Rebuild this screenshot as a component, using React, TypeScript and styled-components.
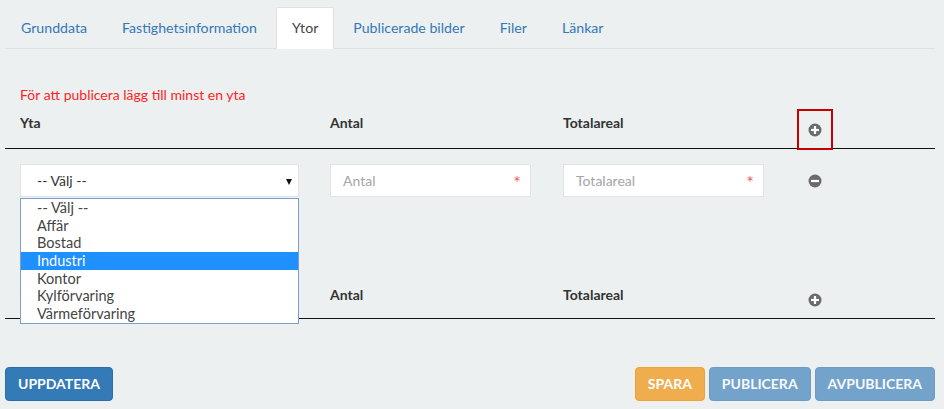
import React from "react";
import styled, { createGlobalStyle, css } from "styled-components";

const GlobalStyle = createGlobalStyle`
  html, body { margin: 0; padding: 0; background: #ecf0f1; }
  body { font-family: Lato, "Open Sans", sans-serif; color: #333; }
  * { box-sizing: border-box; }
`;

const Page = styled.div`
  padding: 7px 9px 0 5px;
  width: 944px;
  height: 409px;
  overflow: hidden;
`;

const TabBar = styled.div`
  display: flex;
  border-bottom: 1px solid #dde1e3;
  height: 42px;
`;

const Tab = styled.div<{ $active?: boolean }>`
  height: 42px;
  margin-right: 3px;
  margin-bottom: -1px;
  padding: 0 15px 1px;
  display: flex;
  align-items: center;
  font-size: 14.15px;
  color: #3479b5;
  border: 1px solid transparent;
  border-radius: 2px 2px 0 0;
  ${(p) =>
    p.$active &&
    css`
      background: #fff;
      color: #444;
      border-color: #dde1e3 #dde1e3 transparent;
    `}
`;

const ErrorText = styled.div`
  margin-top: 36px;
  font-size: 14px;
  line-height: 20px;
  color: #ff1f1f;
  padding-left: 15px;
`;

const TableBlock = styled.div<{ $mt: number }>`
  margin-top: ${(p) => p.$mt}px;
`;

const gridCols = css`
  display: grid;
  grid-template-columns: 310px 233px 234px 1fr;
`;

const HeaderRow = styled.div`
  ${gridCols};
  border-bottom: 1px solid #111;
  align-items: end;
`;

const HeaderCell = styled.div<{ $pb: number }>`
  padding: 0 0 ${(p) => p.$pb}px 15px;
  font-size: 14px;
  line-height: 20px;
  font-weight: 700;
  color: #333;
`;

const IconCell = styled.div`
  padding-left: 17px;
  display: flex;
  align-items: center;
`;

const IconBox = styled.div<{ $marked?: boolean }>`
  width: 32px;
  height: 37px;
  display: flex;
  align-items: center;
  justify-content: center;
  ${(p) =>
    p.$marked &&
    css`
      outline: 2px solid #c40000;
    `}
`;

const DataRow = styled.div`
  ${gridCols};
  padding-top: 13px;
  align-items: center;
`;

const Cell = styled.div`
  padding-left: 15px;
  position: relative;
`;

const SelectBox = styled.div`
  width: 279px;
  height: 33px;
  background: #fff;
  border: 1px solid #e0e4e6;
  padding-left: 16px;
  display: flex;
  align-items: center;
  font-size: 14px;
  color: #333;
  position: relative;
`;

const Arrow = styled.span`
  position: absolute;
  right: 6px;
  top: 14px;
  width: 0;
  height: 0;
  border-left: 3.5px solid transparent;
  border-right: 3.5px solid transparent;
  border-top: 6px solid #111;
`;

const Dropdown = styled.div`
  position: absolute;
  left: 15px;
  top: calc(100% + 1px);
  width: 279px;
  background: #fff;
  border: 1px solid #7e9dce;
  z-index: 10;
`;

const Option = styled.div<{ $hl?: boolean }>`
  height: 17.7px;
  line-height: 17.7px;
  padding-left: 16px;
  font-size: 14.5px;
  color: #444;
  ${(p) =>
    p.$hl &&
    css`
      background: #1e90ff;
      color: #fff;
    `}
`;

const InputBox = styled.div`
  width: 201px;
  height: 33px;
  background: #fff;
  border: 1px solid #e0e4e6;
  padding: 0 9px 0 12px;
  display: flex;
  align-items: center;
  justify-content: space-between;
  font-size: 14px;
`;

const Placeholder = styled.span`
  color: #a3a6a8;
`;

const Required = styled.span`
  color: #ef5b5b;
  font-size: 18px;
  line-height: 1;
  margin-top: 3px;
`;

const Footer = styled.div`
  margin-top: 48px;
  display: flex;
  justify-content: space-between;
  align-items: center;
`;

const ButtonGroup = styled.div`
  display: flex;
  gap: 4px;
`;

const Button = styled.button<{ $variant: "primary" | "warning"; $disabled?: boolean }>`
  font-family: Lato, "Open Sans", sans-serif;
  font-size: 14px;
  font-weight: 700;
  line-height: 20px;
  padding: 6px 12px;
  border-radius: 4px;
  border: 1px solid;
  color: #fff;
  cursor: pointer;
  ${(p) =>
    p.$variant === "primary"
      ? css`
          background: #337ab7;
          border-color: #2e6da4;
        `
      : css`
          background: #f0ad4e;
          border-color: #eea236;
        `}
  ${(p) =>
    p.$disabled &&
    css`
      opacity: 0.65;
      cursor: not-allowed;
    `}
`;

const CircleIcon = ({ plus }: { plus?: boolean }) => (
  <svg width="14" height="14" viewBox="0 0 14 14">
    <circle cx="7" cy="7" r="6.5" fill="#6b6b6b" />
    <rect x="3" y="5.9" width="8" height="2.2" fill="#fff" />
    {plus && <rect x="5.9" y="3" width="2.2" height="8" fill="#fff" />}
  </svg>
);

const tabs = ["Grunddata", "Fastighetsinformation", "Ytor", "Publicerade bilder", "Filer", "Länkar"];
const options = ["-- Välj --", "Affär", "Bostad", "Industri", "Kontor", "Kylförvaring", "Värmeförvaring"];

export default function App() {
  return (
    <>
      <GlobalStyle />
      <Page>
        <TabBar>
          {tabs.map((t) => (
            <Tab key={t} $active={t === "Ytor"}>
              {t}
            </Tab>
          ))}
        </TabBar>

        <ErrorText>För att publicera lägg till minst en yta</ErrorText>

        <TableBlock $mt={6}>
          <HeaderRow>
            <HeaderCell $pb={15}>Yta</HeaderCell>
            <HeaderCell $pb={15}>Antal</HeaderCell>
            <HeaderCell $pb={15}>Totalareal</HeaderCell>
            <IconCell>
              <IconBox $marked>
                <CircleIcon plus />
              </IconBox>
            </IconCell>
          </HeaderRow>
          <DataRow>
            <Cell>
              <SelectBox>
                -- Välj --
                <Arrow />
              </SelectBox>
              <Dropdown>
                {options.map((o) => (
                  <Option key={o} $hl={o === "Industri"}>
                    {o}
                  </Option>
                ))}
              </Dropdown>
            </Cell>
            <Cell>
              <InputBox>
                <Placeholder>Antal</Placeholder>
                <Required>*</Required>
              </InputBox>
            </Cell>
            <Cell>
              <InputBox>
                <Placeholder>Totalareal</Placeholder>
                <Required>*</Required>
              </InputBox>
            </Cell>
            <IconCell>
              <IconBox>
                <CircleIcon />
              </IconBox>
            </IconCell>
          </DataRow>
        </TableBlock>

        <TableBlock $mt={82}>
          <HeaderRow>
            <HeaderCell $pb={13}>Yta</HeaderCell>
            <HeaderCell $pb={13}>Antal</HeaderCell>
            <HeaderCell $pb={13}>Totalareal</HeaderCell>
            <IconCell>
              <IconBox>
                <CircleIcon plus />
              </IconBox>
            </IconCell>
          </HeaderRow>
        </TableBlock>

        <Footer>
          <Button $variant="primary">UPPDATERA</Button>
          <ButtonGroup>
            <Button $variant="warning">SPARA</Button>
            <Button $variant="primary" $disabled>
              PUBLICERA
            </Button>
            <Button $variant="primary" $disabled>
              AVPUBLICERA
            </Button>
          </ButtonGroup>
        </Footer>
      </Page>
    </>
  );
}
